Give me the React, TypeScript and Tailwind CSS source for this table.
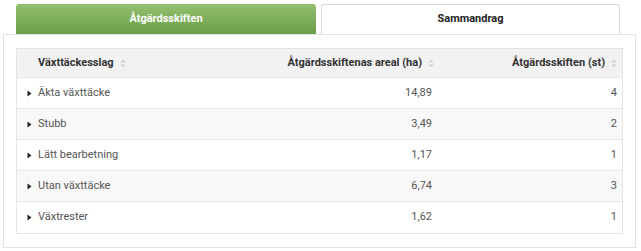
import React from "react";

const rows = [
  ["Äkta växttäcke", "14,89", "4"],
  ["Stubb", "3,49", "2"],
  ["Lätt bearbetning", "1,17", "1"],
  ["Utan växttäcke", "6,74", "3"],
  ["Växtrester", "1,62", "1"],
];

function SortIcon() {
  return (
    <svg width="6" height="9" viewBox="0 0 6 9" className="ml-[6px] shrink-0">
      <path d="M3 0.5 L5.5 3.5 L0.5 3.5 Z" fill="#cfcfcf" />
      <path d="M3 8.5 L5.5 5.5 L0.5 5.5 Z" fill="#cfcfcf" />
    </svg>
  );
}

function Caret() {
  return (
    <svg width="5" height="7" viewBox="0 0 5 7" className="shrink-0">
      <path d="M0.5 0.5 L4.5 3.5 L0.5 6.5 Z" fill="#222" />
    </svg>
  );
}

export default function App() {
  return (
    <div
      className="w-[641px] h-[251px] bg-white pt-[4px]"
      style={{ fontFamily: "Roboto, 'Liberation Sans', sans-serif" }}
    >
      <div className="flex pl-[16px] gap-[5px]">
        <div className="w-[300px] h-[30px] rounded-t-[3px] bg-gradient-to-b from-[#93c06f] to-[#6b9f49] flex items-center justify-center text-white text-[11px] font-bold">
          Åtgärdsskiften
        </div>
        <div className="w-[299px] h-[30px] rounded-t-[3px] border border-b-0 border-[#d9d9d9] bg-white flex items-center justify-center text-[#222] text-[11px] font-bold">
          Sammandrag
        </div>
      </div>
      <div className="ml-[3px] w-[633px] h-[214px] border border-[#e2e2e2] pt-[13px] pl-[12px]">
        <div className="w-[607px] border border-[#e4e4e4]">
          <div className="flex h-[29px] items-center bg-[#f2f2f2] text-[11px] font-bold text-[#333] border-b border-[#e6e6e6]">
            <div className="flex-1 flex items-center pl-[21px]">
              Växttäckesslag
              <SortIcon />
            </div>
            <div className="w-[200px] flex items-center justify-end pr-[1px]">
              Åtgärdsskiftenas areal (ha)
              <SortIcon />
            </div>
            <div className="w-[187px] flex items-center justify-end pr-[5px]">
              Åtgärdsskiften (st)
              <SortIcon />
            </div>
          </div>
          {rows.map((r, i) => (
            <div
              key={i}
              className={`flex h-[31px] items-center text-[11px] text-[#555] ${
                i < rows.length - 1 ? "border-b border-[#e8e8e8]" : ""
              } ${i % 2 === 1 ? "bg-[#f8f8f8]" : "bg-white"}`}
            >
              <div className="flex-1 flex items-center pl-[10px] gap-[6px]">
                <Caret />
                <span>{r[0]}</span>
              </div>
              <div className="w-[200px] text-right pr-[3px]">{r[1]}</div>
              <div className="w-[187px] text-right pr-[5px]">{r[2]}</div>
            </div>
          ))}
        </div>
      </div>
    </div>
  );
}
